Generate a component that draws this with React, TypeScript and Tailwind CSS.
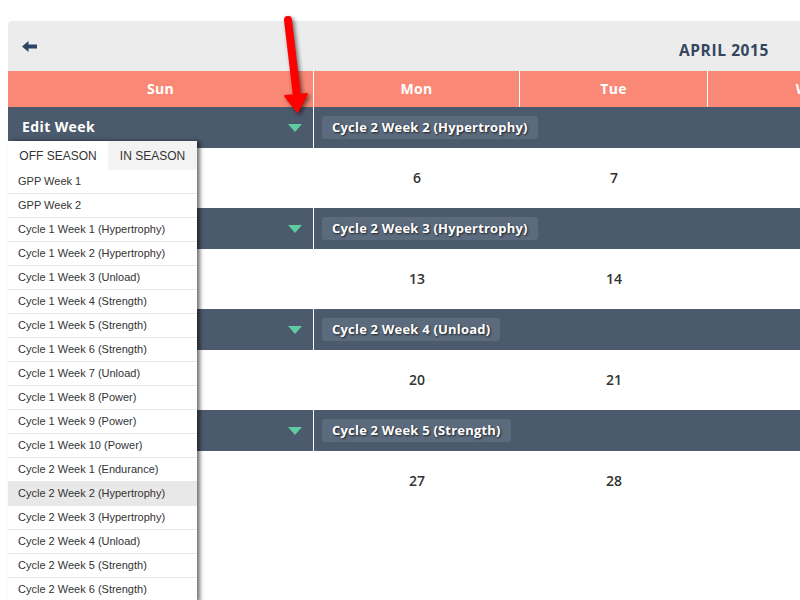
import React from "react";

const weeks = [
  { label: "Cycle 2 Week 2 (Hypertrophy)", dates: ["6", "7"], edit: true },
  { label: "Cycle 2 Week 3 (Hypertrophy)", dates: ["13", "14"] },
  { label: "Cycle 2 Week 4 (Unload)", dates: ["20", "21"] },
  { label: "Cycle 2 Week 5 (Strength)", dates: ["27", "28"] },
];

const options = [
  "GPP Week 1",
  "GPP Week 2",
  "Cycle 1 Week 1 (Hypertrophy)",
  "Cycle 1 Week 2 (Hypertrophy)",
  "Cycle 1 Week 3 (Unload)",
  "Cycle 1 Week 4 (Strength)",
  "Cycle 1 Week 5 (Strength)",
  "Cycle 1 Week 6 (Strength)",
  "Cycle 1 Week 7 (Unload)",
  "Cycle 1 Week 8 (Power)",
  "Cycle 1 Week 9 (Power)",
  "Cycle 1 Week 10 (Power)",
  "Cycle 2 Week 1 (Endurance)",
  "Cycle 2 Week 2 (Hypertrophy)",
  "Cycle 2 Week 3 (Hypertrophy)",
  "Cycle 2 Week 4 (Unload)",
  "Cycle 2 Week 5 (Strength)",
  "Cycle 2 Week 6 (Strength)",
];

const heading = "font-['Open_Sans',sans-serif] font-bold";

function Caret() {
  return (
    <svg width="14" height="8" viewBox="0 0 14 8" className="mr-[11px]">
      <path d="M0 0h14L7 8z" fill="#5fcba0" />
    </svg>
  );
}

function WeekRow({ label, dates, edit }: { label: string; dates: string[]; edit?: boolean }) {
  return (
    <div>
      <div className="flex h-[41px] bg-[#4b5a6c]">
        <div className="flex w-[306px] items-center justify-between border-r border-white pl-[14px]">
          <span className={`${heading} -mt-[3px] text-[14px] tracking-[0.4px] text-white`}>
            {edit ? "Edit Week" : ""}
          </span>
          <Caret />
        </div>
        <div className="flex items-center pl-2">
          <span
            className={`${heading} rounded-[3px] bg-[#5b6a7d] px-[10px] py-[2px] text-[13px] tracking-[0.2px] text-white [text-shadow:1px_1px_2px_rgba(0,0,0,0.7)]`}
          >
            {label}
          </span>
        </div>
      </div>
      <div className="grid h-[60px] grid-cols-[306px_206px_188px_208px] bg-white">
        <div />
        {dates.map((d) => (
          <div
            key={d}
            className={`${heading} -mt-[2px] flex items-center justify-center text-[14px] font-semibold text-[#333]`}
          >
            {d}
          </div>
        ))}
        <div />
      </div>
    </div>
  );
}

export default function App() {
  return (
    <div className="relative h-[600px] w-[800px] overflow-hidden bg-white">
      <div className="ml-2 mt-[21px] w-[792px]">
        <div className="flex h-[50px] items-center justify-between rounded-tl-[4px] bg-[#ececec] pl-[14px] pr-[31px]">
          <svg width="15" height="11" viewBox="0 0 15 11">
            <path d="M0 5.5L6.5 0v3.5H15v4H6.5V11z" fill="#2e4463" />
          </svg>
          <span className={`${heading} mt-[9px] text-[15.5px] tracking-[0.6px] text-[#34465e]`}>APRIL 2015</span>
        </div>
        <div className="grid h-9 w-[908px] grid-cols-[306px_206px_188px_208px] bg-[#fa8876] text-white">
          {["Sun", "Mon", "Tue", "Wed"].map((d) => (
            <div
              key={d}
              className={`${heading} flex items-center justify-center border-r border-white pb-[2px] text-[14px] tracking-[0.3px]`}
            >
              {d}
            </div>
          ))}
        </div>
        <div className="w-[908px]">
          {weeks.map((w) => (
            <WeekRow key={w.label} {...w} />
          ))}
        </div>
      </div>

      <div className="absolute left-2 top-[141px] w-[189px] bg-white font-['Liberation_Sans',Arial,sans-serif] text-[#333] shadow-[3px_0_4px_rgba(0,0,0,0.55)]">
        <div className="flex h-[29px] text-[12px]">
          <div className="flex w-[100px] items-center justify-center bg-white">OFF SEASON</div>
          <div className="flex flex-1 items-center justify-center bg-[#f3f3f3]">IN SEASON</div>
        </div>
        {options.map((o, i) => (
          <div
            key={o}
            className={`flex h-6 items-center border-b border-[#e8e8e8] pl-[10px] text-[11px] ${
              i === 13 ? "bg-[#e8e8e8]" : "bg-white"
            }`}
          >
            {o}
          </div>
        ))}
      </div>

      <svg
        className="absolute left-[270px] top-[8px] [filter:drop-shadow(2px_2px_2px_rgba(0,0,0,0.55))]"
        width="50"
        height="110"
        viewBox="0 0 50 110"
      >
        <path d="M18 12L26.5 84" stroke="#ff0000" strokeWidth="8" strokeLinecap="round" />
        <path d="M15 88L37 86L27.5 104z" fill="#ff0000" stroke="#ff0000" strokeWidth="2" strokeLinejoin="round" />
      </svg>
    </div>
  );
}
